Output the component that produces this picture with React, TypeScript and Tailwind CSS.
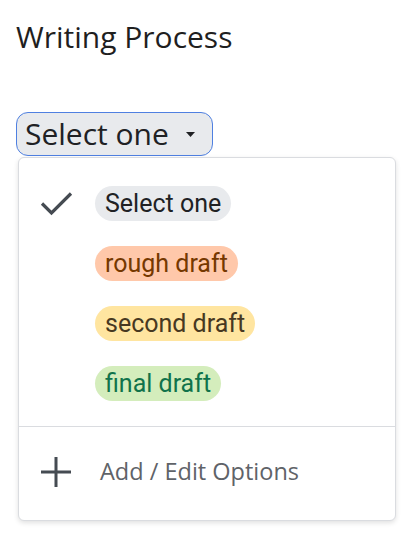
import React from 'react';

const options = [
  { label: 'Select one', bg: 'bg-[#e8eaed]', text: 'text-[#202124]', checked: true },
  { label: 'rough draft', bg: 'bg-[#ffc8aa]', text: 'text-[#753800]', checked: false },
  { label: 'second draft', bg: 'bg-[#ffe5a0]', text: 'text-[#473821]', checked: false },
  { label: 'final draft', bg: 'bg-[#d4edbc]', text: 'text-[#11734b]', checked: false },
];

const App: React.FC = () => {
  return (
    <div className="w-[419px] h-[540px] bg-white px-4 font-['Open_Sans',sans-serif] overflow-hidden">
      <h1 className="pt-[17px] text-[30px] leading-[40px] text-[#1f1f1f] font-normal">Writing Process</h1>

      {/* Select button */}
      <div className="mt-[55px] w-[197px] h-[44px] rounded-[12px] border-[1.5px] border-[#4f80e1] bg-[#e8eaed] flex items-center pl-[8px]">
        <span className="text-[30px] leading-none text-[#202124]">Select one</span>
        <svg className="ml-[17px] mt-[1px]" width="9" height="5" viewBox="0 0 9 5">
          <path d="M0 0h9L4.5 5z" fill="#202124" />
        </svg>
      </div>

      {/* Dropdown panel */}
      <div className="mt-[1px] ml-[2px] w-[378px] h-[364px] rounded-[6px] border border-[#dadce0] bg-white shadow-[0_2px_5px_rgba(0,0,0,0.12)] flex flex-col font-['Roboto',sans-serif]">
        <div className="pt-[28px] flex flex-col gap-[25px]">
          {options.map((o) => (
            <div key={o.label} className="flex items-center h-[35px]">
              <div className="w-[76px] pl-[21px] flex items-center">
                {o.checked && (
                  <svg width="33" height="25" viewBox="0 0 33 25">
                    <path d="M2 12.5l9.5 9.5L31 2.5" fill="none" stroke="#454b52" strokeWidth="3.2" />
                  </svg>
                )}
              </div>
              <span className={`h-[35px] px-[10px] rounded-full flex items-center text-[25px] ${o.bg} ${o.text}`}>
                {o.label}
              </span>
            </div>
          ))}
        </div>
        <div className="mt-[25px] border-t border-[#dadce0]" />
        <div className="flex items-center pt-[27px]">
          <div className="w-[81px] pl-[21px]">
            <svg width="32" height="32" viewBox="0 0 32 32">
              <path d="M16 1v30M1 16h30" fill="none" stroke="#454b52" strokeWidth="3" />
            </svg>
          </div>
          <span className="text-[23.5px] text-[#5f6368] font-['Open_Sans',sans-serif]">Add / Edit Options</span>
        </div>
      </div>
    </div>
  );
};

export default App;
